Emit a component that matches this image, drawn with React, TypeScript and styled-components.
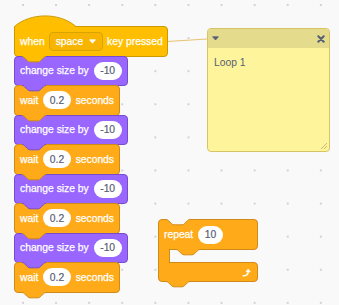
import { Fragment } from "react";
import styled, { createGlobalStyle } from "styled-components";

const palette = {
  events: { fill: "#FFBF00", dark: "#F7B400", stroke: "#CC9900" },
  looks: { fill: "#9966FF", dark: "#855CD6", stroke: "#774DCB" },
  control: { fill: "#FFAB19", dark: "#EC9C13", stroke: "#CF8B17" },
};
type Kind = keyof typeof palette;

const CANVAS = "#F9F9F9";

const GlobalStyle = createGlobalStyle`
  html, body {
    margin: 0;
    padding: 0;
  }
  body {
    font-family: "Liberation Sans", Arial, sans-serif;
  }
`;

// notch / tab shape, in scratch units (36 x 8), scaled down
const NOTCH = "c2 0 3 1 4 2 l4 4 c1 1 2 2 4 2 h12 c2 0 3 -1 4 -2 l4 -4 c1 -1 2 -2 4 -2";

const Notch = ({ fill, stroke, left, top }: { fill: string; stroke: string; left: number; top: string }) => (
  <NotchSvg width={24} height={7} $left={left} $top={top}>
    <g transform="translate(0 0.5) scale(0.667)">
      <path d={`M0 -0.8 V0 ${NOTCH} V-0.8 Z`} fill={fill} />
      <path d={`M0 0 ${NOTCH}`} fill="none" stroke={stroke} strokeWidth={1} vectorEffect="non-scaling-stroke" />
    </g>
  </NotchSvg>
);

const Tab = ({ kind }: { kind: Kind }) => (
  <Notch fill={palette[kind].fill} stroke={palette[kind].stroke} left={7} top="100%" />
);

const Workspace = styled.div`
  position: relative;
  width: 339px;
  height: 305px;
  overflow: hidden;
  background-color: ${CANVAS};
  background-image: radial-gradient(circle, #d2d2d2 0.8px, transparent 1.3px);
  background-size: 33.1px 33.1px;
  background-position: 6.45px -11.55px;
`;

const Script = styled.div`
  position: absolute;
  left: 14px;
  top: 26px;
  display: flex;
  flex-direction: column;
  align-items: flex-start;

  & > * + * {
    margin-top: -1px;
  }
`;

const Block = styled.div<{ $kind: Kind }>`
  position: relative;
  box-sizing: border-box;
  display: flex;
  align-items: center;
  gap: 5px;
  height: 30.5px;
  padding: 0 5px;
  background: ${(p) => palette[p.$kind].fill};
  border: 1px solid ${(p) => palette[p.$kind].stroke};
  border-radius: 4px;
  color: #fff;
  font-size: 10.3px;
  -webkit-text-stroke: 0.25px #fff;
  white-space: nowrap;
`;

const HatBlock = styled(Block)`
  border-top-left-radius: 0;
  padding-right: 4px;
  gap: 4px;
`;

const HatCap = styled.svg`
  position: absolute;
  top: -12px;
  left: -1px;
  overflow: visible;
`;

const NotchSvg = styled.svg<{ $left: number; $top: string }>`
  position: absolute;
  top: ${(p) => p.$top};
  left: ${(p) => p.$left}px;
  overflow: visible;
  z-index: 1;
`;

const Dropdown = styled.div`
  box-sizing: border-box;
  display: flex;
  align-items: center;
  gap: 6px;
  height: 19px;
  padding: 0 6px 0 6px;
  background: ${palette.events.dark};
  border: 1px solid #d9a400;
  border-radius: 4px;
`;

const NumberInput = styled.span`
  box-sizing: border-box;
  display: inline-flex;
  align-items: center;
  justify-content: center;
  height: 18px;
  min-width: 23px;
  padding: 0 6.5px;
  border-radius: 9px;
  background: #fff;
  color: #575e75;
  -webkit-text-stroke: 0.2px #575e75;
`;

const CBlock = styled.div`
  position: absolute;
  left: 158px;
  top: 219px;
  display: flex;
  flex-direction: column;
  align-items: flex-start;
`;

const CTop = styled(Block)`
  width: 100px;
  height: 31px;
  border-radius: 4px 4px 4px 0;
`;

const CSpine = styled.div`
  position: relative;
  z-index: 1;
  box-sizing: border-box;
  width: 12px;
  height: 14px;
  margin-top: -1px;
  background: ${palette.control.fill};
  border-left: 1px solid ${palette.control.stroke};
  border-right: 1px solid ${palette.control.stroke};
`;

const CBottom = styled(Block)`
  width: 100px;
  height: 20px;
  margin-top: -1px;
  justify-content: flex-end;
  padding-right: 6px;
  border-radius: 0 4px 4px 4px;
`;

const Comment = styled.div`
  position: absolute;
  left: 207px;
  top: 28px;
  box-sizing: border-box;
  width: 123px;
  height: 124px;
  display: flex;
  flex-direction: column;
  background: #fef49c;
  border: 1px solid #d8c463;
  border-radius: 4px;
  overflow: hidden;
`;

const CommentBar = styled.div`
  display: flex;
  align-items: center;
  justify-content: space-between;
  height: 19px;
  padding: 0 4px 0 4px;
  background: #e4db8c;
`;

const CommentText = styled.div`
  padding: 9px 6px;
  font-size: 10.3px;
  color: #575e75;
`;

const ResizeHandle = styled.svg`
  position: absolute;
  right: 2px;
  bottom: 2px;
`;

const Connector = styled.svg`
  position: absolute;
  left: 166px;
  top: 37px;
  overflow: visible;
`;

const DropArrow = () => (
  <svg width={7} height={5} viewBox="0 0 7 5">
    <path d="M0.6 0.8 H6.4 L3.5 4.2 Z" fill="#fff" stroke="#fff" strokeWidth={0.8} strokeLinejoin="round" />
  </svg>
);

const RepeatArrow = () => (
  <svg width={9} height={9} viewBox="0 0 9 9">
    <path d="M1.2 7.8 C4.4 7.8 6.2 6.4 6.2 3.4" fill="none" stroke="#fff" strokeWidth={1.4} strokeLinecap="round" />
    <path d="M4 3.9 L6.2 1 L8.4 3.9 Z" fill="#fff" stroke="#fff" strokeWidth={0.6} strokeLinejoin="round" />
  </svg>
);

export default function App() {
  return (
    <>
      <GlobalStyle />
      <Workspace>
        <Connector width={42} height={6}>
          <line x1={1} y1={4.5} x2={41} y2={2} stroke="#e8c270" strokeWidth={1} />
        </Connector>

        <Script>
          <HatBlock $kind="events">
            <HatCap width={63} height={12}>
              <path d="M0.5 11.5 C16.5 -2.6 45.9 -2.6 61.9 11.5 V12.2 H1 Z" fill={palette.events.fill} />
              <path d="M0.5 11.5 C16.5 -2.6 45.9 -2.6 61.9 11.5" fill="none" stroke={palette.events.stroke} />
            </HatCap>
            <span>when</span>
            <Dropdown>
              <span>space</span>
              <DropArrow />
            </Dropdown>
            <span>key pressed</span>
            <Tab kind="events" />
          </HatBlock>
          {[0, 1, 2, 3].map((i) => (
            <Fragment key={i}>
              <Block $kind="looks">
                <span>change size by</span>
                <NumberInput>-10</NumberInput>
                <Tab kind="looks" />
              </Block>
              <Block $kind="control">
                <span>wait</span>
                <NumberInput>0.2</NumberInput>
                <span>seconds</span>
                <Tab kind="control" />
              </Block>
            </Fragment>
          ))}
        </Script>

        <Comment>
          <CommentBar>
            <svg width={7} height={5} viewBox="0 0 7 5">
              <path d="M0.6 0.8 H6.4 L3.5 4 Z" fill="#575e75" stroke="#575e75" strokeWidth={0.8} strokeLinejoin="round" />
            </svg>
            <svg width={8} height={8} viewBox="0 0 8 8">
              <path d="M1.3 1.3 L6.7 6.7 M6.7 1.3 L1.3 6.7" stroke="#575e75" strokeWidth={2} strokeLinecap="round" />
            </svg>
          </CommentBar>
          <CommentText>Loop 1</CommentText>
          <ResizeHandle width={7} height={7} viewBox="0 0 7 7">
            <path d="M1 7 L7 1 M4 7 L7 4" stroke="#b8ab6a" strokeWidth={0.8} />
          </ResizeHandle>
        </Comment>

        <CBlock>
          <CTop $kind="control">
            <Notch fill={CANVAS} stroke={palette.control.stroke} left={7} top="-1px" />
            <span>repeat</span>
            <NumberInput>10</NumberInput>
            <Notch fill={palette.control.fill} stroke={palette.control.stroke} left={17} top="100%" />
          </CTop>
          <CSpine />
          <CBottom $kind="control">
            <RepeatArrow />
            <Tab kind="control" />
          </CBottom>
        </CBlock>
      </Workspace>
    </>
  );
}
